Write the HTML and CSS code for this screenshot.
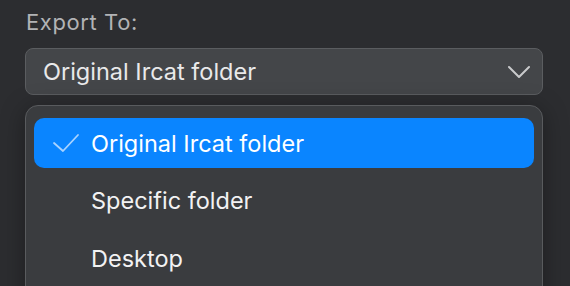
FILE: index.html
```html
<!DOCTYPE html>
<html lang="en">
<head>
  <meta charset="UTF-8">
  <title>Export To</title>
  <link rel="stylesheet" href="styles.css">
</head>
<body>
  <div class="export-panel">
    <div class="field-label">Export To:</div>

    <!-- Closed popup button -->
    <div class="popup-button">
      <span class="popup-value">Original Ircat folder</span>
      <svg class="chevron" width="24" height="14" viewBox="0 0 24 14">
        <path d="M2 2 L12 12 L22 2" fill="none" stroke="#c9cacc" stroke-width="2" stroke-linecap="round" stroke-linejoin="round"/>
      </svg>
    </div>

    <!-- Open menu -->
    <div class="popup-menu">
      <div class="menu-item selected">
        <svg class="check" width="28" height="20" viewBox="0 0 28 20">
          <path d="M2 10 L11 18 L26 2" fill="none" stroke="#a9d3ff" stroke-width="1.8" stroke-linecap="round" stroke-linejoin="round"/>
        </svg>
        <span>Original Ircat folder</span>
      </div>
      <div class="menu-item">
        <span>Specific folder</span>
      </div>
      <div class="menu-item">
        <span>Desktop</span>
      </div>
    </div>
  </div>
</body>
</html>
```

FILE: styles.css
```css
body {
  margin: 0;
  padding: 0;
  width: 570px;
  height: 286px;
  overflow: hidden;
  background-color: #2c2d30;
  font-family: Inter, "Noto Sans", sans-serif;
}

.export-panel {
  display: flex;
  flex-direction: column;
  width: 518px;
  padding: 8px 0 0 25px;
}

.field-label {
  color: #b2b3b5;
  font-size: 22px;
  line-height: 28px;
  letter-spacing: 0.6px;
  padding-left: 1px;
}

.popup-button {
  display: flex;
  align-items: center;
  justify-content: space-between;
  height: 45px;
  margin-top: 12px;
  padding: 0 11px 0 17px;
  background-color: #444649;
  border: 1px solid #5b5d60;
  border-radius: 8px;
}

.popup-value {
  color: #e9e9ea;
  font-size: 23.5px;
}

.chevron {
  display: block;
}

.popup-menu {
  display: flex;
  flex-direction: column;
  gap: 7.5px;
  height: 220px;
  margin-top: 10px;
  padding: 12px 8px 0 8px;
  background-color: #3a3c3f;
  border: 1px solid #595b5e;
  border-radius: 13px;
  box-shadow: 0 4px 24px rgba(0, 0, 0, 0.35);
}

.menu-item {
  display: flex;
  align-items: center;
  height: 50px;
  padding-left: 57px;
  position: relative;
  color: #f2f2f3;
  font-size: 23.5px;
  border-radius: 10px;
}

.menu-item.selected {
  background-color: #0a85ff;
  color: #ffffff;
}

.check {
  position: absolute;
  left: 18px;
  top: 15px;
}
```
